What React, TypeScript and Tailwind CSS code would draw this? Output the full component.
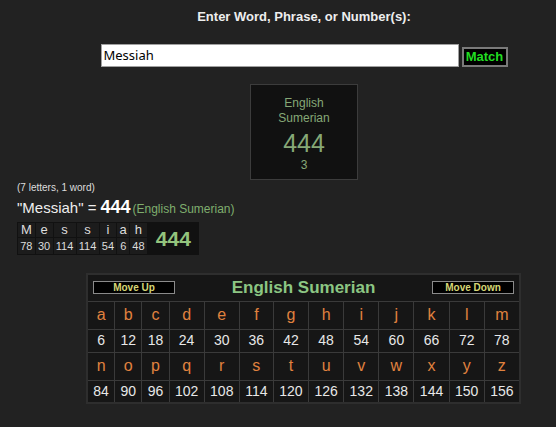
import React from "react";

const letters1 = ["a","b","c","d","e","f","g","h","i","j","k","l","m"];
const nums1 = [6,12,18,24,30,36,42,48,54,60,66,72,78];
const letters2 = ["n","o","p","q","r","s","t","u","v","w","x","y","z"];
const nums2 = [84,90,96,102,108,114,120,126,132,138,144,150,156];
const word = ["M","e","s","s","i","a","h"];
const wordNums = [78,30,114,114,54,6,48];

export default function App() {
  const sans = { fontFamily: '"Liberation Sans", Arial, sans-serif' } as React.CSSProperties;
  return (
    <div className="min-h-[427px] w-[556px] bg-[#222222] text-white" style={sans}>
      <div className="pl-[52px] flex flex-col items-center">
        <div className="pt-[9px] text-[13px] font-bold text-[#eeeeee] leading-[15px]">
          Enter Word, Phrase, or Number(s):
        </div>
        <div className="mt-[20px] flex items-end gap-[3px]">
          <div
            className="w-[358px] h-[23px] bg-white border border-[#a0a0a0] text-[13px] text-black leading-[21px] pl-[2px]"
            style={{ fontFamily: '"Noto Sans", sans-serif' }}
          >
            Messiah
          </div>
          <div className="w-[46px] h-[20px] bg-black border-2 border-[#7a7a7a] text-[13px] font-bold text-[#22dd22] leading-[16px] flex items-center justify-center">
            Match
          </div>
        </div>
        <div className="mt-[17px] w-[108px] h-[96px] bg-[#111111] border border-[#3c3c3c] flex flex-col items-center pt-[11px] text-[#86a877]">
          <div className="text-[12px] leading-[14px]">English</div>
          <div className="text-[12px] leading-[14px] mt-[1px]">Sumerian</div>
          <div className="text-[25px] leading-[29px] mt-[4px]">444</div>
          <div className="text-[12px] leading-[14px]">3</div>
        </div>
      </div>

      <div className="pl-[17px] mt-[2px]">
        <div className="text-[10px] text-[#dddddd] leading-[12px]">(7 letters, 1 word)</div>
        <div className="mt-[3px] flex items-baseline leading-[20px]">
          <span className="text-[15px] text-[#eeeeee]">"Messiah" = </span>
          <span className="text-[18px] font-bold text-white ml-[4px]">444</span>
          <span className="text-[12px] text-[#7fae6e] ml-[2px]">(English Sumerian)</span>
        </div>
        <div className="mt-[3px] flex w-fit bg-[#111111]">
          <table className="border-collapse bg-[#1c1c1c]">
            <tbody>
              <tr>
                {word.map((l, i) => (
                  <td key={i} className="border border-[#111111] text-center text-[13px] text-[#dddddd] leading-[14px] h-[15px] px-[2.25px]">
                    {l}
                  </td>
                ))}
              </tr>
              <tr>
                {wordNums.map((n, i) => (
                  <td key={i} className="border border-[#111111] text-center text-[11px] text-[#dddddd] leading-[13px] h-[17px] px-[2.25px]">
                    {n}
                  </td>
                ))}
              </tr>
            </tbody>
          </table>
          <div className="w-[51px] flex items-center justify-center text-[21px] font-bold text-[#93c47d]">444</div>
        </div>
      </div>

      <div className="ml-[86px] mt-[18px] w-[435px]">
        <table className="w-[435px] border-collapse bg-[#161616] border-2 border-[#2e2e2e]">
          <tbody>
            <tr>
              <td colSpan={13} className="border border-[#3a3a3a] h-[27px] px-[5px]">
                <div className="flex items-center justify-between">
                  <div className="w-[82px] h-[13px] bg-black border border-[#8a8a8a] text-[10px] font-bold text-[#d6d675] leading-[11px] text-center">
                    Move Up
                  </div>
                  <div className="text-[17px] font-bold text-[#8cc683] leading-[20px]">English Sumerian</div>
                  <div className="w-[82px] h-[13px] bg-black border border-[#8a8a8a] text-[10px] font-bold text-[#d6d675] leading-[11px] text-center">
                    Move Down
                  </div>
                </div>
              </td>
            </tr>
            {[ [letters1, nums1], [letters2, nums2] ].map(([ls, ns], r) => (
              <React.Fragment key={r}>
                <tr>
                  {(ls as string[]).map((l) => (
                    <td key={l} className="border border-[#3a3a3a] h-[28px] text-center text-[16px] text-[#e0823f] px-[5px]">
                      {l}
                    </td>
                  ))}
                </tr>
                <tr>
                  {(ns as number[]).map((n) => (
                    <td key={n} className="border border-[#3a3a3a] h-[23px] text-center text-[14px] text-[#e8e8e8] px-[5px]">
                      {n}
                    </td>
                  ))}
                </tr>
              </React.Fragment>
            ))}
          </tbody>
        </table>
      </div>
    </div>
  );
}
